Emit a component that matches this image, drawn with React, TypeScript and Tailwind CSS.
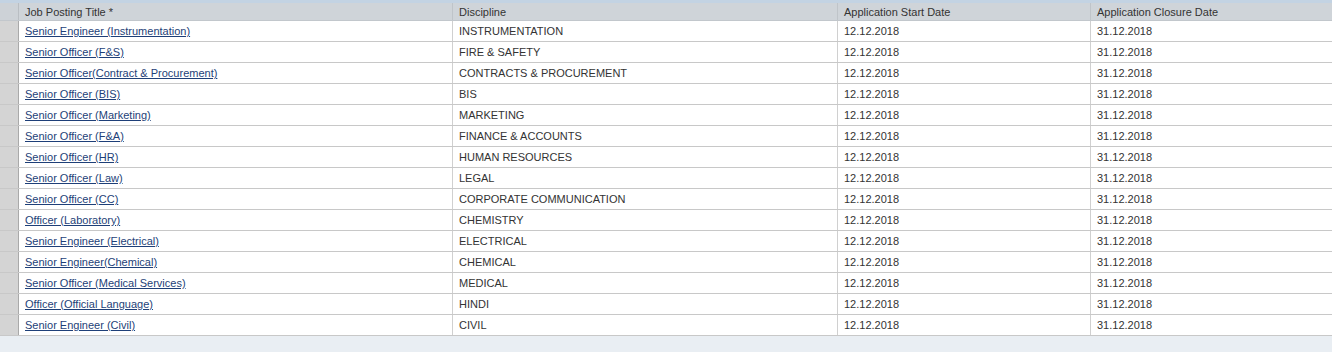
const jobs = [
  ["Senior Engineer (Instrumentation)", "INSTRUMENTATION"],
  ["Senior Officer (F&S)", "FIRE & SAFETY"],
  ["Senior Officer(Contract & Procurement)", "CONTRACTS & PROCUREMENT"],
  ["Senior Officer (BIS)", "BIS"],
  ["Senior Officer (Marketing)", "MARKETING"],
  ["Senior Officer (F&A)", "FINANCE & ACCOUNTS"],
  ["Senior Officer (HR)", "HUMAN RESOURCES"],
  ["Senior Officer (Law)", "LEGAL"],
  ["Senior Officer (CC)", "CORPORATE COMMUNICATION"],
  ["Officer (Laboratory)", "CHEMISTRY"],
  ["Senior Engineer (Electrical)", "ELECTRICAL"],
  ["Senior Engineer(Chemical)", "CHEMICAL"],
  ["Senior Officer (Medical Services)", "MEDICAL"],
  ["Officer (Official Language)", "HINDI"],
  ["Senior Engineer (Civil)", "CIVIL"],
];

const cols = "grid grid-cols-[19px_434px_385px_253px_1fr]";

const App = () => {
  return (
    <div className="w-[1332px] h-[352px] bg-[#e9eef3] font-['Liberation_Sans',Arial,sans-serif] text-[11px] text-[#333] overflow-hidden">
      <div className="h-[3px] bg-[#c3d3e3]" />
      <div className={`${cols} h-[18px] bg-[#cfd4d9] border-b border-[#c2c7cc]`}>
        <div className="border-r border-[#b9bec3] bg-[#cdd2d7]" />
        <div className="pl-[6px] pt-[1px] leading-[16px] border-r border-[#bfc4c9]">Job Posting Title *</div>
        <div className="pl-[6px] pt-[1px] leading-[16px] border-r border-[#bfc4c9]">Discipline</div>
        <div className="pl-[6px] pt-[1px] leading-[16px] border-r border-[#bfc4c9]">Application Start Date</div>
        <div className="pl-[6px] pt-[1px] leading-[16px]">Application Closure Date</div>
      </div>
      {jobs.map(([title, discipline]) => (
        <div key={title} className={`${cols} h-[21px] bg-white border-b border-[#c8c8c8]`}>
          <div className="bg-[#d4d4d4] border-r border-[#a9a9a9]" />
          <div className="pl-[6px] leading-[20px] border-r border-[#d0d0d0]">
            <a href="#" className="text-[#1e3f78] underline">
              {title}
            </a>
          </div>
          <div className="pl-[6px] leading-[20px] border-r border-[#d0d0d0]">{discipline}</div>
          <div className="pl-[6px] leading-[20px] border-r border-[#d0d0d0]">12.12.2018</div>
          <div className="pl-[6px] leading-[20px]">31.12.2018</div>
        </div>
      ))}
    </div>
  );
};

export default App;
